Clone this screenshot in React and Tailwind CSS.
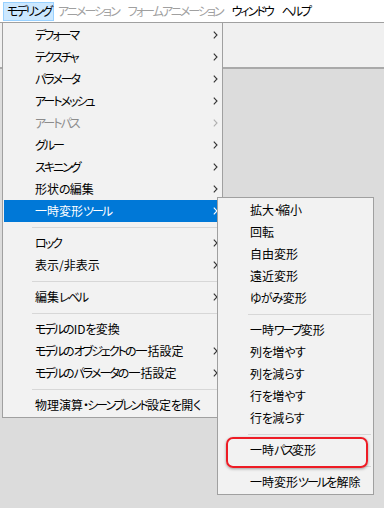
import React from 'react';

const mainItems = [
  { label: 'デフォーマ', sub: true },
  { label: 'テクスチャ', sub: true },
  { label: 'パラメータ', sub: true },
  { label: 'アートメッシュ', sub: true },
  { label: 'アートパス', sub: true, disabled: true },
  { label: 'グルー', sub: true },
  { label: 'スキニング', sub: true },
  { label: '形状の編集', sub: true },
  { label: '一時変形ツール', sub: true, active: true },
  { sep: true },
  { label: 'ロック', sub: true },
  { label: '表示/非表示', sub: true },
  { sep: true },
  { label: '編集レベル', sub: true },
  { sep: true },
  { label: 'モデルのIDを変換' },
  { label: 'モデルのオブジェクトの一括設定', sub: true },
  { label: 'モデルのパラメータの一括設定', sub: true },
  { sep: true },
  { label: '物理演算・シーンブレンド設定を開く' },
];

const subItems = [
  { label: '拡大・縮小' },
  { label: '回転' },
  { label: '自由変形' },
  { label: '遠近変形' },
  { label: 'ゆがみ変形' },
  { sep: true },
  { label: '一時ワープ変形' },
  { label: '列を増やす' },
  { label: '列を減らす' },
  { label: '行を増やす' },
  { label: '行を減らす' },
  { sep: true },
  { label: '一時パス変形' },
  { sep: true },
  { label: '一時変形ツールを解除' },
];

// Yu Gothic UI kana are narrower than Noto's, so squeeze kana runs a little
function Jp({ text }) {
  const runs = text.match(/[\u30A0-\u30FF\u31F0-\u31FF]+|[\u3040-\u309F]+|[^\u3040-\u30FF\u31F0-\u31FF]+/g) || [];
  return runs.map((r, i) => {
    if (/[\u30A0-\u30FF\u31F0-\u31FF]/.test(r)) {
      return <span key={i} className="tracking-[-2px]">{r}</span>;
    }
    if (/[\u3040-\u309F]/.test(r)) {
      return <span key={i} className="tracking-[-0.8px]">{r}</span>;
    }
    return <span key={i}>{r}</span>;
  });
}

function Chevron({ color }) {
  return (
    <svg width="5" height="8" viewBox="0 0 5 8" className="shrink-0">
      <path d="M0.8 0.6 L4 4 L0.8 7.4" fill="none" stroke={color} strokeWidth="1.1" />
    </svg>
  );
}

function MenuList({ items, sepIndent }) {
  return (
    <div className="flex flex-col">
      {items.map((item, i) => {
        if (item.sep) {
          return (
            <div key={i} className="h-[10px] flex items-center">
              <div className={`h-px flex-1 bg-[#d7d7d7] ${sepIndent} mr-[1px]`} />
            </div>
          );
        }
        return (
          <div
            key={i}
            className={`h-[22px] flex items-center pl-[31px] pr-[3px] ${
              item.active ? 'bg-[#0078d7] text-white' : item.disabled ? 'text-[#8c8c8c]' : 'text-black'
            }`}
          >
            <span className="flex-1 leading-none whitespace-nowrap">
              <Jp text={item.label} />
            </span>
            {item.sub && (
              <Chevron color={item.active ? '#ffffff' : item.disabled ? '#b0b0b0' : '#333333'} />
            )}
          </div>
        );
      })}
    </div>
  );
}

export default function App() {
  return (
    <div
      className="relative w-[384px] h-[508px] overflow-hidden bg-[#dcdcdc] text-[12px] [font-feature-settings:'palt']"
      style={{ fontFamily: '"Noto Sans CJK JP", "Noto Sans", sans-serif' }}
    >
      {/* menu bar */}
      <div className="h-[22px] bg-white flex items-center pl-[3px]">
        <div className="h-[19px] flex items-center pl-[3px] pr-[2px] bg-[#cce8ff] border border-[#99d1ff] leading-none whitespace-nowrap">
          <Jp text="モデリング" />
        </div>
        <div className="flex items-center gap-[9px] ml-[4px] leading-none whitespace-nowrap">
          <span className="text-[#a0a0a0]"><Jp text="アニメーション" /></span>
          <span className="text-[#a0a0a0]"><Jp text="フォームアニメーション" /></span>
          <span className="text-black"><Jp text="ウィンドウ" /></span>
          <span className="text-black"><Jp text="ヘルプ" /></span>
        </div>
      </div>

      {/* toolbar area */}
      <div className="h-[47px] bg-[#f0f0f0] border-t border-[#a0a0a0] border-b-2 border-b-[#a9a9a9]" />

      {/* main dropdown */}
      <div className="absolute left-[2px] top-[22px] w-[221px] bg-[#f2f2f2] border border-[#a0a0a0] py-[1px] px-[1px]">
        <MenuList items={mainItems} sepIndent="ml-[28px]" />
      </div>

      {/* submenu */}
      <div className="absolute left-[217px] top-[197px] w-[157px] bg-[#f2f2f2] border border-[#a0a0a0] py-[1px] px-[1px]">
        <MenuList items={subItems} sepIndent="ml-[29px]" />
      </div>

      {/* highlight box */}
      <div className="absolute left-[226px] top-[437px] w-[142px] h-[31px] rounded-[7px] border-2 border-[#ee1c25] shadow-[0_1px_3px_rgba(0,0,0,0.35)]" />
    </div>
  );
}
